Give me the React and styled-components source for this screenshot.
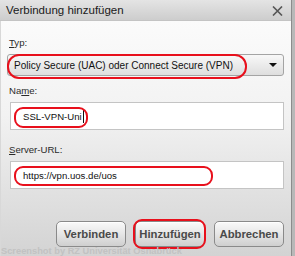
import React from "react";
import styled, { createGlobalStyle } from "styled-components";

const GlobalStyle = createGlobalStyle`
  html, body {
    margin: 0;
    padding: 0;
    background: #b8b8b8;
  }
  body {
    font-family: "Liberation Sans", Arial, sans-serif;
  }
`;

function CloseIcon() {
  return (
    <svg width="11" height="10" viewBox="0 0 11 10">
      <path d="M1 0.5 L10 9.5 M10 0.5 L1 9.5" stroke="#555" strokeWidth="1.6" />
    </svg>
  );
}

function Field({ label, mnemonic, children }) {
  const i = label.indexOf(mnemonic);
  return (
    <>
      <Label>
        {label.slice(0, i)}
        <u>{mnemonic}</u>
        {label.slice(i + mnemonic.length)}
      </Label>
      {children}
    </>
  );
}

export default function App() {
  return (
    <>
      <GlobalStyle />
      <Window>
        <TitleBar>
          <span>Verbindung hinzufügen</span>
          <CloseIcon />
        </TitleBar>
        <Body>
          <Field label="Typ:" mnemonic="T">
            <Select>
              <span>Policy Secure (UAC) oder Connect Secure (VPN)</span>
              <Arrow />
              <Mark $left={-1} $top={-1} $w={240} $h={25} $r={12} />
            </Select>
          </Field>
          <Field label="Name:" mnemonic="m">
            <Input>
              SSL-VPN-Uni<Caret />
              <Mark $left={3} $top={4} $w={74} $h={21} $r={9} />
            </Input>
          </Field>
          <Field label="Server-URL:" mnemonic="S">
            <Input>
              https://vpn.uos.de/uos
              <Mark $left={3} $top={4} $w={199} $h={20} $r={9} />
            </Input>
          </Field>
          <Buttons>
            <Button>Verbinden</Button>
            <Button>
              Hinzufügen
              <Mark $left={-3} $top={-3} $w={73} $h={30} $r={9} />
            </Button>
            <Button>Abbrechen</Button>
          </Buttons>
          <Watermark>Screenshot by RZ Universität Osnabrück</Watermark>
        </Body>
      </Window>
    </>
  );
}

const Window = styled.div`
  width: 291px;
  height: 256px;
  border-right: 1px solid #8c8c8c;
  display: flex;
  flex-direction: column;
  overflow: hidden;
`;

const TitleBar = styled.div`
  height: 21px;
  flex: none;
  display: flex;
  align-items: center;
  justify-content: space-between;
  padding: 0 8px 0 6px;
  background: linear-gradient(#e4e4e4, #cdcdcd);
  border-bottom: 1px solid #c4c4c4;
  box-sizing: border-box;
  font-size: 11.5px;
  color: #1a1a1a;
  svg {
    margin-top: 1px;
  }
`;

const Body = styled.div`
  position: relative;
  flex: 1;
  display: flex;
  flex-direction: column;
  padding: 16px 7px 9px 6px;
  background: linear-gradient(#fbfbfb, #f2f2f2 40%, #d3d3d3);
  border-left: 1px solid #d8d8d8;
`;

const Label = styled.div`
  font-size: 9.6px;
  line-height: 12px;
  color: #2a2a2a;
  padding-left: 2px;
  margin-bottom: 5px;
  u {
    text-decoration-thickness: 1px;
  }
`;

const Select = styled.div`
  position: relative;
  height: 22px;
  display: flex;
  align-items: center;
  justify-content: space-between;
  padding: 0 6px 0 6px;
  box-sizing: border-box;
  border: 1px solid #a4a4a4;
  border-radius: 3px;
  background: linear-gradient(#f8f8f8, #dedede);
  font-size: 10px;
  color: #111;
  margin-bottom: 9px;
`;

const Arrow = styled.div`
  width: 0;
  height: 0;
  border-left: 4px solid transparent;
  border-right: 4px solid transparent;
  border-top: 4px solid #111;
`;

const Input = styled.div`
  position: relative;
  height: 28px;
  margin-left: 3px;
  display: flex;
  align-items: center;
  padding-left: 12px;
  box-sizing: border-box;
  border: 1px solid #c4c4c4;
  background: #fff;
  font-size: 9.6px;
  color: #111;
  margin-bottom: 14px;
`;

const Caret = styled.span`
  display: inline-block;
  width: 1px;
  height: 13px;
  background: #111;
  margin-left: 1px;
`;

const Mark = styled.span`
  position: absolute;
  left: ${(p) => p.$left}px;
  top: ${(p) => p.$top}px;
  width: ${(p) => p.$w}px;
  height: ${(p) => p.$h}px;
  border: 2px solid #e8101c;
  border-radius: ${(p) => p.$r}px;
  box-sizing: border-box;
  pointer-events: none;
`;

const Buttons = styled.div`
  margin-top: auto;
  display: flex;
  justify-content: flex-end;
  gap: 9px;
`;

const Button = styled.div`
  position: relative;
  width: 70px;
  height: 26px;
  box-sizing: border-box;
  display: flex;
  align-items: center;
  justify-content: center;
  border: 1px solid #8a8a8a;
  border-radius: 5px;
  background: linear-gradient(#fafafa, #e6e6e6 50%, #cfcfcf);
  box-shadow: inset 0 1px 0 #fff;
  font-size: 11.3px;
  font-weight: bold;
  color: #4a4a4a;
`;

const Watermark = styled.div`
  position: absolute;
  left: 0;
  bottom: 0;
  font-size: 9.3px;
  line-height: 10px;
  font-weight: bold;
  color: #c2c2c2;
  white-space: nowrap;
`;
